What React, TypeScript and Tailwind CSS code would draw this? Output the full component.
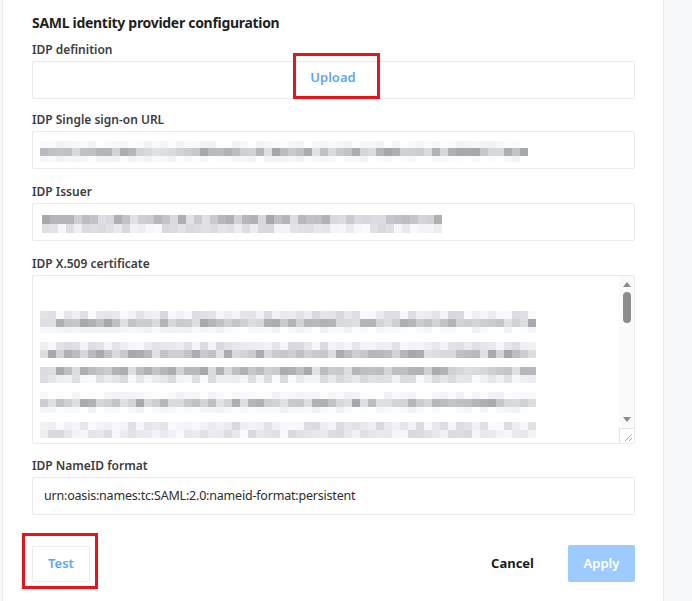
import React from 'react'

const font = { fontFamily: '"Noto Sans", "Open Sans", sans-serif' }

// deterministic pseudo random for the blurred mosaic
function rand(seed: number) {
  let s = seed
  return () => {
    s = (s * 9301 + 49297) % 233280
    return s / 233280
  }
}

type Row = { h: number; tone: 'dark' | 'light' | 'faint' }

function Mosaic({ width, rows, seed }: { width: number; rows: Row[]; seed: number }) {
  const r = rand(seed)
  const cells = Math.floor(width / 8)
  return (
    <div className="flex flex-col">
      {rows.map((row, i) => (
        <div key={i} className="flex" style={{ height: row.h }}>
          {Array.from({ length: cells }).map((_, j) => {
            const v = r()
            let c = 0
            if (row.tone === 'dark') c = 165 + Math.floor(v * 60)
            else if (row.tone === 'light') c = 215 + Math.floor(v * 35)
            else c = 240 + Math.floor(v * 15)
            const b = Math.min(255, c + 6)
            return <div key={j} className="w-[8px] h-full" style={{ background: `rgb(${c},${c + 2},${b})` }} />
          })}
        </div>
      ))}
    </div>
  )
}

function Label({ children }: { children: React.ReactNode }) {
  return <div className="h-[16px] mb-[3px] text-[12px] leading-[16px] font-semibold text-[#3d3d3d]">{children}</div>
}

export default function App() {
  return (
    <div className="w-[692px] h-[601px] flex bg-[#f7f8fa] overflow-hidden" style={font}>
      <div className="ml-[2px] w-[662px] h-full bg-white border-x border-[#ececec] pl-[29px] pr-[28px] pt-[13px]">
        <div className="h-[20px] text-[14px] leading-[20px] tracking-[-0.3px] font-bold text-[#1f1f1f] mb-[9px]">
          SAML identity provider configuration
        </div>

        {/* IDP definition */}
        <Label>IDP definition</Label>
        <div className="h-[38px] border border-[#ebebeb] rounded-[2px] flex items-end justify-center">
          <div className="relative ml-[5px] mb-[-1px] w-[87px] h-[46px] border-[3px] border-[#e8141c] flex items-center justify-center pt-[4px] pr-[6px]">
            <span className="text-[13px] font-semibold text-[#64a4f8]">Upload</span>
          </div>
        </div>

        {/* single sign-on */}
        <div className="mt-[13px]">
          <Label>IDP Single sign-on URL</Label>
          <div className="h-[38px] border border-[#ebebeb] rounded-[2px] pl-[7px] pt-[9px]">
            <Mosaic width={488} seed={7} rows={[{ h: 7, tone: 'faint' }, { h: 8, tone: 'dark' }, { h: 6, tone: 'faint' }]} />
          </div>
        </div>

        {/* issuer */}
        <div className="mt-[15px]">
          <Label>IDP Issuer</Label>
          <div className="h-[38px] border border-[#ebebeb] rounded-[2px] pl-[9px] pt-[11px]">
            <Mosaic width={400} seed={21} rows={[{ h: 9, tone: 'dark' }, { h: 9, tone: 'light' }]} />
          </div>
        </div>

        {/* certificate */}
        <div className="mt-[15px]">
          <Label>IDP X.509 certificate</Label>
          <div className="h-[169px] border border-[#ebebeb] rounded-[2px] flex overflow-hidden">
            <div className="flex-1 pl-[7px] pt-[35px] flex flex-col gap-[9px]">
              <Mosaic width={496} seed={3} rows={[{ h: 8, tone: 'light' }, { h: 8, tone: 'dark' }, { h: 6, tone: 'faint' }]} />
              <Mosaic width={496} seed={11} rows={[{ h: 8, tone: 'light' }, { h: 8, tone: 'dark' }]} />
              <Mosaic width={496} seed={17} rows={[{ h: 8, tone: 'dark' }, { h: 8, tone: 'light' }]} />
              <Mosaic width={496} seed={29} rows={[{ h: 7, tone: 'faint' }, { h: 8, tone: 'dark' }, { h: 6, tone: 'faint' }]} />
              <Mosaic width={496} seed={37} rows={[{ h: 8, tone: 'light' }, { h: 8, tone: 'light' }]} />
            </div>
            <div className="w-[15px] bg-[#fafafa] flex flex-col items-center">
              <div className="mt-[6px] w-0 h-0 border-x-[4px] border-x-transparent border-b-[5px] border-b-[#8c8c8c]" />
              <div className="mt-[5px] w-[8px] h-[31px] rounded-full bg-[#8c8c8c]" />
              <div className="flex-1" />
              <div className="mb-[6px] w-0 h-0 border-x-[4px] border-x-transparent border-t-[5px] border-t-[#8c8c8c]" />
              <div className="w-[15px] h-[15px] border-l border-t border-[#e2e2e2] bg-white flex items-end justify-end p-[2px]">
                <svg width="8" height="8" viewBox="0 0 8 8">
                  <path d="M1 8 L8 1 M5 8 L8 5" stroke="#777" strokeWidth="0.9" strokeDasharray="1 0.6" />
                </svg>
              </div>
            </div>
          </div>
        </div>

        {/* NameID */}
        <div className="mt-[14px]">
          <Label>IDP NameID format</Label>
          <div className="h-[38px] border border-[#ebebeb] rounded-[2px] pl-[11px] flex items-center text-[12.5px] tracking-[-0.2px] text-[#2e2e2e]">
            urn:oasis:names:tc:SAML:2.0:nameid-format:persistent
          </div>
        </div>

        {/* actions */}
        <div className="mt-[18px] flex items-start">
          <div className="ml-[-10px] w-[76px] h-[56px] border-[3px] border-[#e8141c] pl-[7px] pt-[10px]">
            <button className="w-[58px] h-[36px] border border-[#ececec] rounded-[2px] bg-white text-[13px] font-semibold text-[#64a4f8]">
              Test
            </button>
          </div>
          <div className="flex-1" />
          <div className="mt-[12px] h-[37px] flex items-center">
            <button className="mr-[34px] text-[13px] font-bold text-[#1a1a1a]">Cancel</button>
            <button className="w-[67px] h-[37px] rounded-[2px] bg-[#9ecbff] text-[13px] font-semibold text-white">
              Apply
            </button>
          </div>
        </div>
      </div>
      <div className="flex-1" />
    </div>
  )
}
